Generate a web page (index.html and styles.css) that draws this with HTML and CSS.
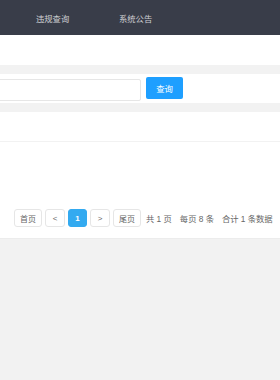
FILE: index.html
```html
<!DOCTYPE html>
<html lang="zh-CN">
<head>
    <meta charset="UTF-8">
    <meta name="viewport" content="width=device-width, initial-scale=1.0">
    <title>违规查询</title>
    <link rel="stylesheet" href="styles.css">
</head>
<body>
    <div class="nav">
        <a class="nav-item">违规查询</a>
        <a class="nav-item">系统公告</a>
    </div>
    <div class="crumb"></div>
    <div class="card search">
        <input type="text" class="search-input">
        <button class="btn">查询</button>
    </div>
    <div class="card list">
        <div class="list-head"></div>
        <div class="list-body"></div>
        <div class="pager">
            <a class="page">首页</a>
            <a class="page small">&lt;</a>
            <a class="page small current">1</a>
            <a class="page small">&gt;</a>
            <a class="page">尾页</a>
            <span class="page-info">共 1 页</span>
            <span class="page-info">每页 8 条</span>
            <span class="page-info">合计 1 条数据</span>
        </div>
    </div>
</body>
</html>
```

FILE: styles.css
```css
body, html {
    margin: 0;
    padding: 0;
    background-color: #f2f2f2;
    font-family: "Liberation Sans", "Noto Sans CJK SC", sans-serif;
    font-size: 8px;
    color: #666;
}
.nav {
    height: 35px;
    background-color: #393d49;
    display: flex;
    align-items: center;
    padding-left: 36px;
    gap: 50px;
}
.nav-item {
    color: rgba(255,255,255,0.75);
    font-size: 8.3px;
    width: 33px;
    white-space: nowrap;
}
.crumb {
    height: 30px;
    background: #fff;
    margin-bottom: 9px;
}
.card {
    background: #fff;
}
.search {
    height: 29px;
    display: flex;
    align-items: center;
    margin-bottom: 9px;
}
.search-input {
    box-sizing: border-box;
    width: 143px;
    height: 22px;
    margin: 3px 0 0 -2px;
    border: 1px solid #e6e6e6;
    border-radius: 2px;
    outline: none;
}
.btn {
    height: 22px;
    width: 37px;
    margin-left: 5px;
    margin-top: -1px;
    border: none;
    border-radius: 2px;
    background-color: #1e9fff;
    color: #fff;
    font-family: inherit;
    font-size: 8.4px;
    padding: 0;
}
.list {
    height: 126px;
    border-bottom: 1px solid #ececec;
}
.list-head {
    height: 29px;
    border-bottom: 1px solid #f2f2f2;
}
.list-body {
    height: 67px;
}
.pager {
    display: flex;
    align-items: center;
    gap: 3px;
    padding-left: 14px;
}
.page {
    box-sizing: border-box;
    height: 18px;
    width: 28px;
    display: flex;
    align-items: center;
    justify-content: center;
    border: 1px solid #e6e6e6;
    border-radius: 3px;
    color: #666;
    background: #fff;
}
.page.small {
    width: 20px;
}
.page.current {
    width: 19px;
    background-color: #33aaf0;
    border-color: #33aaf0;
    color: #fff;
    font-weight: bold;
}
.page-info {
    margin-left: 2px;
    margin-right: 3px;
    white-space: nowrap;
    color: #666;
    font-size: 8.3px;
}
```
